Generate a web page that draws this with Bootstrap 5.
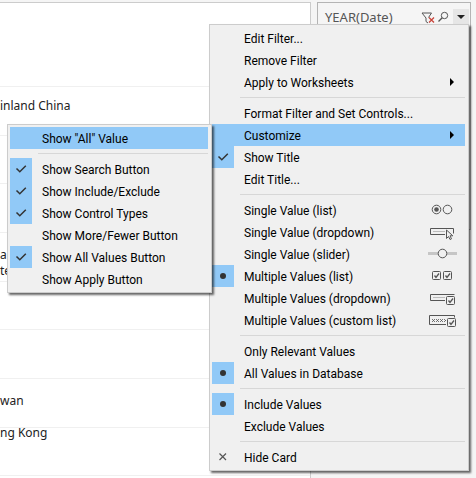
<!DOCTYPE html>
<html lang="en">
<head>
<meta charset="utf-8">
<meta name="viewport" content="width=device-width, initial-scale=1">
<title>Filter card menu</title>
<link rel="stylesheet" href="https://cdn.jsdelivr.net/npm/bootstrap@5.3.0/dist/css/bootstrap.min.css">
<style>
body { background: #f5f5f5; font-family: Roboto, "Open Sans", sans-serif; font-size: 12px; line-height: 16px; color: #000; overflow: hidden; }
.workspace { min-height: 100vh; gap: 6px; padding: 2px 5px 0 0; }
.sheet { background: #fff; border-top: 1px solid #ccc; border-right: 1px solid #ccc; }
.sheet-head { height: 84px; border-bottom: 1px solid #f0f0f0; }
.sheet-row { height: 49px; border-bottom: 1px solid #f0f0f0; padding-top: 11px; font-family: "Noto Sans", sans-serif; color: #222; white-space: nowrap; }
.sheet-row:nth-child(3n) { height: 48px; }
.sheet-row.label-top { padding-top: 0; line-height: 10px; }
.sheet-row.label-low { padding-top: 14px; }
.filter-card { width: 154px; height: 228px; border: 1px solid #b4b4b4; }
.filter-title { font-family: "Noto Sans", sans-serif; font-size: 13px; color: #555; padding: 6px 0 0 7px; }
.tool { border: 0; background: none; padding: 0; margin-top: 8px; width: 16px; height: 16px; line-height: 0; }
.tool-open { background: #e6e6e6; margin: 6px 1px 0 0; }
.ctx-menu { --bs-dropdown-min-width: 0; --bs-dropdown-font-size: 12px; background: #f0f0f0; border: 1px solid #ccc; border-radius: 0; padding: 2px 3px 2px 2px; margin: 0; box-shadow: 2px 2px 2px rgba(0,0,0,.6); }
.menu-main { left: 209px; top: 24px; width: 260px; }
.menu-sub { left: 7px; top: 124px; width: 205px; z-index: 1010; }
.ctx-item { height: 22px; padding: 0; gap: 10px; color: #000; font-size: 12px; line-height: 24px; }
.ctx-item:hover, .ctx-item:focus, .ctx-item.current { background: #91c9f7; color: #000; }
.gutter { width: 22px; height: 22px; line-height: 0; }
.gutter.marked { background: #91c9f7; }
.ctx-line { margin: 4px 0 4px 28px; border-top: 1px solid #d7d7d7; opacity: 1; }
svg { fill: none; stroke: #555; }
.hint { width: 30px; height: 22px; margin-right: 7px; }
</style>
</head>
<body>
<svg class="d-none" aria-hidden="true">
  <symbol id="tick" viewBox="0 0 22 22"><path d="M6.500 10.500l3.300 3.300 6-6" stroke="#333" stroke-width="1.500"/></symbol>
  <symbol id="dot" viewBox="0 0 22 22"><circle cx="11" cy="11" r="3" fill="#333" stroke="none"/></symbol>
  <symbol id="cross" viewBox="0 0 22 22"><path d="M7.500 7.500l6.500 6.500M14 7.500l-6.500 6.500" stroke="#555" stroke-width="1.200"/></symbol>
  <symbol id="next" viewBox="0 0 30 22"><path d="M22 7v8l4-4z" fill="#000" stroke="none"/></symbol>
  <symbol id="box" viewBox="0 0 10 10"><rect x=".5" y=".5" width="8" height="8" rx="1" fill="#f0f0f0"/><path d="M2.500 4.500l1.500 2 3-4" stroke-width="1.300"/></symbol>
</svg>
<div class="workspace d-flex align-items-stretch">
  <main class="sheet flex-grow-1">
    <div class="sheet-head"></div>
    <div class="sheet-row">inland China</div>
    <div class="sheet-row"></div>
    <div class="sheet-row"></div>
    <div class="sheet-row label-low">a<br>te</div>
    <div class="sheet-row"></div>
    <div class="sheet-row"></div>
    <div class="sheet-row label-low">wan</div>
    <div class="sheet-row label-top">ng Kong</div>
  </main>
  <aside class="filter-card flex-shrink-0">
    <div class="d-flex align-items-start">
      <div class="filter-title flex-grow-1">YEAR(Date)</div>
      <button class="tool" type="button" aria-label="Clear filter"><svg width="16" height="16"><path d="M7.500 6.500l3-4.500H1l4 5v3.500l2 1.500"/><path d="M8 6.500l5 5M13 6.500l-5 5" stroke="#c8443a" stroke-width="1.300"/></svg></button>
      <button class="tool" type="button" aria-label="Search"><svg width="16" height="16"><circle cx="7.500" cy="4.500" r="3.200"/><path d="M5.200 6.800l-3.700 3.700" stroke-width="1.300"/></svg></button>
      <button class="tool tool-open" type="button" aria-label="Card menu" aria-expanded="true"><svg width="16" height="16"><path d="M4 6h8l-4 4z" fill="#222" stroke="none"/></svg></button>
    </div>
  </aside>
</div>

<ul class="ctx-menu menu-main dropdown-menu show">
  <li><button type="button" class="ctx-item dropdown-item d-flex"><span class="gutter"></span>Edit Filter...</button></li>
  <li><button type="button" class="ctx-item dropdown-item d-flex"><span class="gutter"></span>Remove Filter</button></li>
  <li><button type="button" class="ctx-item dropdown-item d-flex"><span class="gutter"></span>Apply to Worksheets<svg class="hint ms-auto"><use href="#next"/></svg></button></li>
  <li><hr class="ctx-line"></li>
  <li><button type="button" class="ctx-item dropdown-item d-flex"><span class="gutter"></span>Format Filter and Set Controls...</button></li>
  <li><button type="button" class="ctx-item dropdown-item d-flex current" aria-expanded="true"><span class="gutter"></span>Customize<svg class="hint ms-auto"><use href="#next"/></svg></button></li>
  <li><button type="button" class="ctx-item dropdown-item d-flex"><span class="gutter marked"><svg width="22" height="22"><use href="#tick"/></svg></span>Show Title</button></li>
  <li><button type="button" class="ctx-item dropdown-item d-flex"><span class="gutter"></span>Edit Title...</button></li>
  <li><hr class="ctx-line"></li>
  <li><button type="button" class="ctx-item dropdown-item d-flex"><span class="gutter"></span>Single Value (list)<svg class="hint ms-auto"><circle cx="8.500" cy="10.500" r="4.300"/><circle cx="8.500" cy="10.500" r="2.300" fill="#555" stroke="none"/><circle cx="19.500" cy="10.500" r="4.300"/></svg></button></li>
  <li><button type="button" class="ctx-item dropdown-item d-flex"><span class="gutter"></span>Single Value (dropdown)<svg class="hint ms-auto"><path d="M17 13.500H2.500v-6h23v5"/><path d="M5 10.500h12" stroke="#bbb"/><path d="M18.500 9v8.500l2-2 1.500 3 1.500-.7-1.500-3h2.800z" fill="#f0f0f0"/></svg></button></li>
  <li><button type="button" class="ctx-item dropdown-item d-flex"><span class="gutter"></span>Single Value (slider)<svg class="hint ms-auto"><path d="M0 10.500h29" stroke="#c6c6c6" stroke-width="3"/><circle cx="14.500" cy="10.500" r="4.300" fill="#f0f0f0"/></svg></button></li>
  <li><button type="button" class="ctx-item dropdown-item d-flex"><span class="gutter marked"><svg width="22" height="22"><use href="#dot"/></svg></span>Multiple Values (list)<svg class="hint ms-auto"><use href="#box" x="4" y="6" width="10" height="10"/><use href="#box" x="15" y="6" width="10" height="10"/></svg></button></li>
  <li><button type="button" class="ctx-item dropdown-item d-flex"><span class="gutter"></span>Multiple Values (dropdown)<svg class="hint ms-auto"><path d="M17 13.500H2.500v-6h24"/><path d="M5 10.500h12" stroke="#bbb"/><use href="#box" x="18" y="9" width="10" height="10"/></svg></button></li>
  <li><button type="button" class="ctx-item dropdown-item d-flex"><span class="gutter"></span>Multiple Values (custom list)<svg class="hint ms-auto"><path d="M18 15.500H1.500v-9h25v2"/><path d="M4 10l3 3M7 10l-3 3M8 10l3 3M11 10l-3 3M12 10l3 3M15 10l-3 3M16 10l2 2M18 11l-2 2" stroke-width=".8"/><use href="#box" x="19" y="9" width="10" height="10"/></svg></button></li>
  <li><hr class="ctx-line"></li>
  <li><button type="button" class="ctx-item dropdown-item d-flex"><span class="gutter"></span>Only Relevant Values</button></li>
  <li><button type="button" class="ctx-item dropdown-item d-flex"><span class="gutter marked"><svg width="22" height="22"><use href="#dot"/></svg></span>All Values in Database</button></li>
  <li><hr class="ctx-line"></li>
  <li><button type="button" class="ctx-item dropdown-item d-flex"><span class="gutter marked"><svg width="22" height="22"><use href="#dot"/></svg></span>Include Values</button></li>
  <li><button type="button" class="ctx-item dropdown-item d-flex"><span class="gutter"></span>Exclude Values</button></li>
  <li><hr class="ctx-line"></li>
  <li><button type="button" class="ctx-item dropdown-item d-flex"><span class="gutter"><svg width="22" height="22"><use href="#cross"/></svg></span>Hide Card</button></li>
</ul>

<ul class="ctx-menu menu-sub dropdown-menu show">
  <li><button type="button" class="ctx-item dropdown-item d-flex current"><span class="gutter"></span>Show "All" Value</button></li>
  <li><hr class="ctx-line"></li>
  <li><button type="button" class="ctx-item dropdown-item d-flex"><span class="gutter marked"><svg width="22" height="22"><use href="#tick"/></svg></span>Show Search Button</button></li>
  <li><button type="button" class="ctx-item dropdown-item d-flex"><span class="gutter marked"><svg width="22" height="22"><use href="#tick"/></svg></span>Show Include/Exclude</button></li>
  <li><button type="button" class="ctx-item dropdown-item d-flex"><span class="gutter marked"><svg width="22" height="22"><use href="#tick"/></svg></span>Show Control Types</button></li>
  <li><button type="button" class="ctx-item dropdown-item d-flex"><span class="gutter"></span>Show More/Fewer Button</button></li>
  <li><button type="button" class="ctx-item dropdown-item d-flex"><span class="gutter marked"><svg width="22" height="22"><use href="#tick"/></svg></span>Show All Values Button</button></li>
  <li><button type="button" class="ctx-item dropdown-item d-flex"><span class="gutter"></span>Show Apply Button</button></li>
</ul>
<script src="https://cdn.jsdelivr.net/npm/bootstrap@5.3.0/dist/js/bootstrap.bundle.min.js"></script>
</body>
</html>
